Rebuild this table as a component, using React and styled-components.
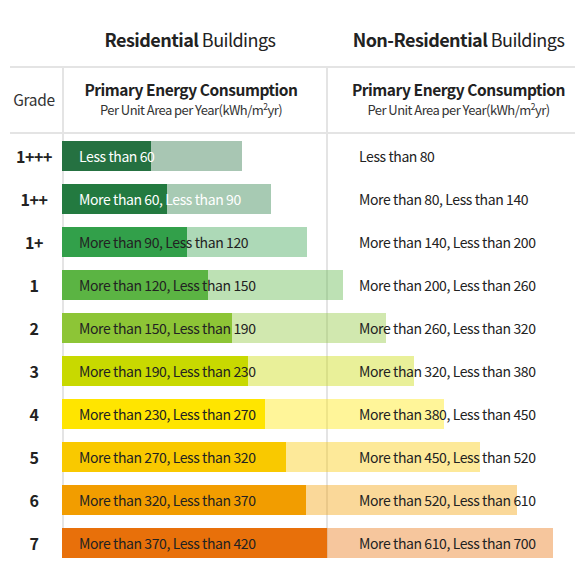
import React from "react";
import styled, { createGlobalStyle } from "styled-components";

const GlobalStyle = createGlobalStyle`
  * { box-sizing: border-box; }
  body {
    margin: 0;
    background: #fff;
    font-family: "Noto Sans CJK KR", "Noto Sans", sans-serif;
    color: #222;
  }
`;

const LINE = "#e4e4e4";

const grades = [
  { grade: "1+++", color: "#257141", fill: 89, track: 180, light: true, res: "Less than 60", non: "Less than 80" },
  { grade: "1++", color: "#237a40", fill: 105, track: 209, light: true, res: "More than 60, Less than 90", non: "More than 80, Less than 140" },
  { grade: "1+", color: "#32a04a", fill: 125, track: 245, res: "More than 90, Less than 120", non: "More than 140, Less than 200" },
  { grade: "1", color: "#5bb443", fill: 146, track: 281, res: "More than 120, Less than 150", non: "More than 200, Less than 260" },
  { grade: "2", color: "#8dc536", fill: 170, track: 324, res: "More than 150, Less than 190", non: "More than 260, Less than 320" },
  { grade: "3", color: "#c8d900", fill: 186, track: 352, res: "More than 190, Less than 230", non: "More than 320, Less than 380" },
  { grade: "4", color: "#ffe500", fill: 203, track: 382, res: "More than 230, Less than 270", non: "More than 380, Less than 450" },
  { grade: "5", color: "#f9c900", fill: 224, track: 418, res: "More than 270, Less than 320", non: "More than 450, Less than 520" },
  { grade: "6", color: "#f29d00", fill: 244, track: 455, res: "More than 320, Less than 370", non: "More than 520, Less than 610" },
  { grade: "7", color: "#e8700a", fill: 265, track: 491, res: "More than 370, Less than 420", non: "More than 610, Less than 700" },
];

const Page = styled.div`
  width: 585px;
  height: 585px;
  padding: 0 10px;
`;

const Columns = styled.div`
  display: grid;
  grid-template-columns: 52px 264px 249px;
`;

const Titles = styled(Columns)`
  height: 66px;
  align-items: end;
  padding-bottom: 14px;
`;

const Title = styled.h2`
  margin: 0;
  font-size: 18px;
  font-weight: 400;
  letter-spacing: -0.55px;
  text-align: center;
  grid-column: ${(p) => p.$col};
  padding: ${(p) => (p.$col === 2 ? "0 8px 0 0" : "0 0 0 16px")};
  b { font-weight: 700; }
`;

const HeadRow = styled(Columns)`
  height: 68px;
  border-top: 2px solid ${LINE};
  border-bottom: 2px solid ${LINE};
`;

const HeadCell = styled.div`
  display: flex;
  flex-direction: column;
  align-items: center;
  justify-content: center;
  gap: 2px;
  border-left: ${(p) => (p.$first ? "none" : `2px solid ${LINE}`)};
  padding: ${(p) => (p.$col === 3 ? "0 0 2px 14px" : p.$first ? "0 4px 2px 0" : "0 8px 2px 0")};
`;

const GradeHead = styled.span`
  font-size: 15.5px;
  color: #333;
  letter-spacing: -0.3px;
`;

const HeadTitle = styled.span`
  font-size: 15.5px;
  font-weight: 700;
  letter-spacing: -0.45px;
  line-height: 20px;
`;

const HeadSub = styled.span`
  font-size: 13px;
  letter-spacing: -0.55px;
  color: #333;
  line-height: 18px;
  sup {
    font-size: 8.5px;
    line-height: 0;
    vertical-align: 5px;
  }
`;

const Body = styled.div`
  display: flex;
  flex-direction: column;
  gap: 13px;
  padding-top: 7px;
  background:
    linear-gradient(${LINE}, ${LINE}) 52px 0 / 2px 100% no-repeat,
    linear-gradient(${LINE}, ${LINE}) 316px 0 / 2px 100% no-repeat;
`;

const Row = styled(Columns)`
  height: 30px;
`;

const Grade = styled.div`
  grid-column: 1;
  display: flex;
  align-items: center;
  justify-content: center;
  padding-right: 4px;
  font-size: 16px;
  font-weight: 700;
  letter-spacing: -0.5px;
  color: #222;
`;

const Track = styled.div`
  grid-column: 2 / 4;
  grid-row: 1;
  height: 30px;
  background: ${(p) => p.$color}66;
`;

const Fill = styled.div`
  height: 100%;
  background: ${(p) => p.$color};
`;

const Label = styled.div`
  grid-row: 1;
  grid-column: ${(p) => p.$col};
  display: flex;
  align-items: center;
  white-space: nowrap;
  padding: 0 0 1px ${(p) => (p.$col === 2 ? "17px" : "33px")};
  font-size: 14px;
  letter-spacing: -0.4px;
  color: ${(p) => (p.$light ? "#fff" : "#222")};
  position: relative;
`;

export default function App() {
  return (
    <Page>
      <GlobalStyle />
      <Titles>
        <Title $col={2}>
          <b>Residential</b> Buildings
        </Title>
        <Title $col={3}>
          <b>Non-Residential</b> Buildings
        </Title>
      </Titles>
      <HeadRow>
        <HeadCell $first>
          <GradeHead>Grade</GradeHead>
        </HeadCell>
        <HeadCell $col={2}>
          <HeadTitle>Primary Energy Consumption</HeadTitle>
          <HeadSub>
            Per Unit Area per Year(kWh/m<sup>2</sup>yr)
          </HeadSub>
        </HeadCell>
        <HeadCell $col={3}>
          <HeadTitle>Primary Energy Consumption</HeadTitle>
          <HeadSub>
            Per Unit Area per Year(kWh/m<sup>2</sup>yr)
          </HeadSub>
        </HeadCell>
      </HeadRow>
      <Body>
        {grades.map((g) => (
          <Row key={g.grade}>
            <Grade>{g.grade}</Grade>
            <Track $color={g.color} style={{ width: g.track }}>
              <Fill $color={g.color} style={{ width: g.fill }} />
            </Track>
            <Label $col={2} $light={g.light}>
              {g.res}
            </Label>
            <Label $col={3}>{g.non}</Label>
          </Row>
        ))}
      </Body>
    </Page>
  );
}
